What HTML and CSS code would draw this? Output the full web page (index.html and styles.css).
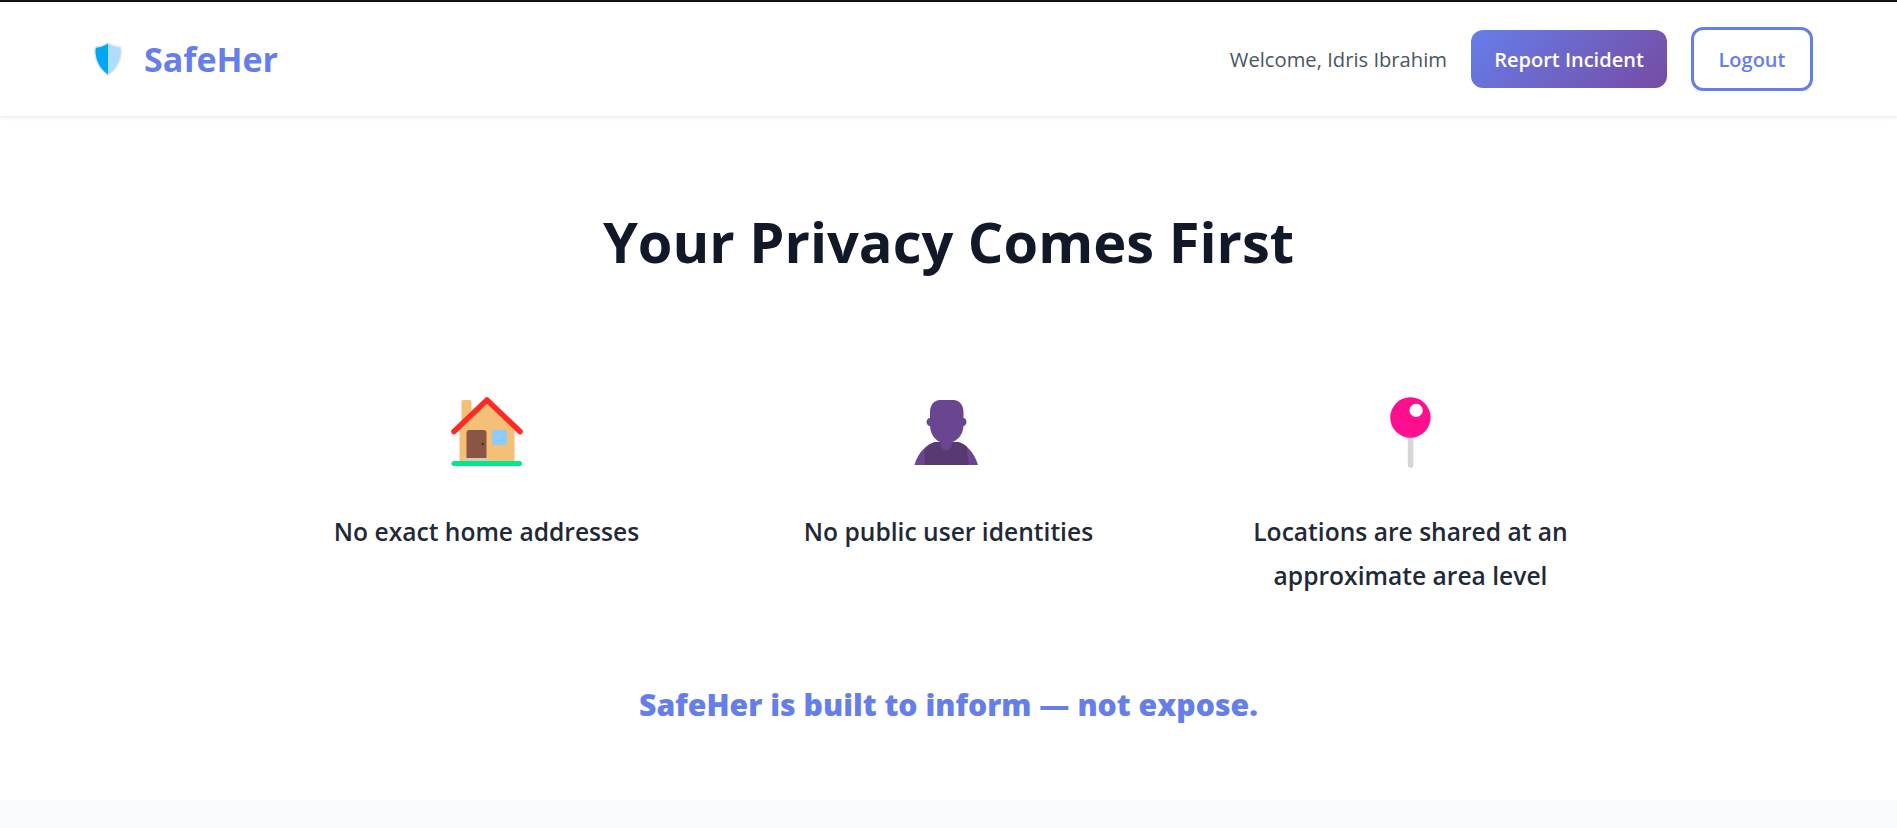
FILE: index.html
```html
<!DOCTYPE html>
<html lang="en">
<head>
    <meta charset="UTF-8">
    <meta name="viewport" content="width=device-width, initial-scale=1.0">
    <title>SafeHer</title>
    <link rel="stylesheet" href="styles.css">
</head>
<body>
    <nav class="navbar">
        <a class="logo" href="#">
            <svg class="logo-icon" viewBox="0 0 30 36" width="30" height="36">
                <path d="M15 1 C19 4 23 5 27 5 C29 6 29 8 29 10 C29 20 24 29 15 35 C6 29 1 20 1 10 C1 8 1 6 3 5 C7 5 11 4 15 1 Z" fill="#e4e4e4"/>
                <path d="M15 2.500 C11 5 7 6.500 4 6.500 C2.500 7 2.500 9 2.500 10 C2.500 19 7 28 15 33.500 Z" fill="#00a8f3"/>
                <path d="M15 2.500 C19 5 23 6.500 26 6.500 C27.500 7 27.500 9 27.500 10 C27.500 19 23 28 15 33.500 Z" fill="#aedcff"/>
            </svg>
            <span>SafeHer</span>
        </a>
        <div class="nav-right">
            <span class="welcome">Welcome, Idris Ibrahim</span>
            <button class="btn btn-primary">Report Incident</button>
            <button class="btn btn-outline">Logout</button>
        </div>
    </nav>

    <section class="privacy">
        <h1>Your Privacy Comes First</h1>
        <div class="privacy-grid">
            <div class="privacy-item">
                <svg class="privacy-icon" viewBox="0 0 76 76" width="76" height="76">
                    <rect x="12.500" y="6" width="10" height="26" rx="1.500" fill="#f4c078"/>
                    <path d="M38 6 L65.500 34 V67 H10.500 V34 Z" fill="#f4c078"/>
                    <path d="M17.500 65 V39 Q17.500 36 20.500 36 H34.500 Q37.500 36 37.500 39 V65 Z" fill="#8b5543"/>
                    <circle cx="33.800" cy="50" r="1.200" fill="#333"/>
                    <rect x="43" y="36" width="15" height="15" rx="2" fill="#8ccaff"/>
                    <rect x="15" y="64" width="25" height="3" fill="#d9c8b4"/>
                    <path d="M5 37.500 L38 6 L71 37.500" fill="none" stroke="#ff2a23" stroke-width="5.500" stroke-linecap="round" stroke-linejoin="round"/>
                    <rect x="2.500" y="67" width="70.500" height="5" rx="2.500" fill="#00e98a"/>
                </svg>
                <p>No exact home addresses</p>
            </div>
            <div class="privacy-item">
                <svg class="privacy-icon" viewBox="0 0 76 76" width="76" height="76">
                    <path d="M3.500 71 C7 58 16 50 24 48 H47 C55 50 63 58 67 71 Z" fill="#6b4690"/>
                    <path d="M13.500 71 V56 C17 52 20 50 24 48 H47 C51 49 54 51 56 53 C56 59 57 65 58 71 Z" fill="#573b70"/>
                    <path d="M29 6 H42.500 C48.500 6 52.500 11 52.500 18 V24 C54.500 24 55.500 26 55.500 28 C55.500 30 54 32 52.500 32 C52 41 46 47 41 48 V50 C41 54 38 56 35.500 56 C33 56 29.500 54 29.500 50 V48 C25 47 19.500 41 19 32 C17 32 15.500 30 15.500 28 C15.500 26 17 24 19 24 V18 C19 11 23 6 29 6 Z" fill="#6b4690"/>
                </svg>
                <p>No public user identities</p>
            </div>
            <div class="privacy-item">
                <svg class="privacy-icon" viewBox="0 0 76 76" width="76" height="76">
                    <rect x="34.800" y="40" width="5.600" height="33.700" rx="2.800" fill="#d6d6d6"/>
                    <circle cx="37.400" cy="23.500" r="20.200" fill="#ff0f8f"/>
                    <circle cx="43.100" cy="16.300" r="6.600" fill="#fff"/>
                </svg>
                <p>Locations are shared at an approximate area level</p>
            </div>
        </div>
        <p class="tagline">SafeHer is built to inform — not expose.</p>
    </section>

    <div class="next-section"></div>
</body>
</html>
```

FILE: styles.css
```css
* {
    box-sizing: border-box;
}

body {
    font-family: "Open Sans", "Noto Sans", sans-serif;
    background-color: #fff;
    margin: 0;
    padding: 0;
    height: 828px;
    overflow: hidden;
    border-top: 2px solid #111;
    display: flex;
    flex-direction: column;
}

.navbar {
    height: 114px;
    padding: 0 84px 0 93px;
    display: flex;
    justify-content: space-between;
    align-items: center;
    background-color: #fff;
    box-shadow: 0 2px 4px rgba(0, 0, 0, 0.08);
}

.logo {
    display: flex;
    align-items: center;
    gap: 21px;
    color: #667eea;
    font-size: 34px;
    font-weight: 700;
    text-decoration: none;
}

.nav-right {
    display: flex;
    align-items: center;
    gap: 24px;
}

.welcome {
    color: #4b5563;
    font-size: 20.2px;
}

.btn {
    font-family: inherit;
    font-size: 20px;
    font-weight: 600;
    border-radius: 12px;
    cursor: pointer;
}

.btn-primary {
    width: 196px;
    height: 58px;
    padding: 0;
    border: none;
    color: #fff;
    background: linear-gradient(135deg, #667eea, #764ba2);
}

.btn-outline {
    width: 122px;
    height: 64px;
    padding: 0;
    border: 3px solid #667eea;
    color: #667eea;
    background: #fff;
}

.privacy {
    flex: 1;
    display: flex;
    flex-direction: column;
    align-items: center;
    padding-top: 86px;
}

h1 {
    margin: 0;
    color: #111827;
    font-size: 56px;
    font-weight: 700;
    line-height: 78px;
}

.privacy-grid {
    display: grid;
    grid-template-columns: repeat(3, 320px);
    column-gap: 142px;
    margin-top: 114px;
}

.privacy-item {
    display: flex;
    flex-direction: column;
    align-items: center;
    text-align: center;
}

.privacy-icon {
    display: block;
}

.privacy-item p {
    margin: 40px 0 0;
    color: #1f2937;
    font-size: 24.6px;
    font-weight: 600;
    line-height: 43.5px;
}

.tagline {
    margin: 87px 0 0;
    color: #667eea;
    font-size: 30.2px;
    font-weight: 800;
}

.next-section {
    height: 28px;
    background-color: #f9fafb;
}
```
